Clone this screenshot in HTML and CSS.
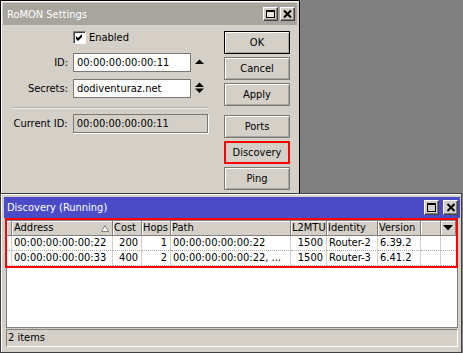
FILE: index.html
```html
<!DOCTYPE html>
<html>
<head>
<meta charset="utf-8">
<title>RoMON</title>
<link rel="stylesheet" href="styles.css">
</head>
<body>
<div class="win settings">
  <div class="title inactive">
    <span class="ttext">RoMON Settings</span>
    <div class="tbtns">
      <span class="tb"><svg width="13" height="12" viewBox="0 0 13 12"><rect x="2.5" y="2.5" width="8" height="7" fill="#e8e6e0" stroke="#000"/><rect x="2" y="2" width="9" height="2" fill="#000"/></svg></span>
      <span class="tb"><svg width="13" height="12" viewBox="0 0 13 12"><path d="M3 2.5 L10 9.5 M10 2.5 L3 9.5" stroke="#000" stroke-width="2"/></svg></span>
    </div>
  </div>
  <div class="sbody">
    <div class="lcol">
      <div class="chkrow">
        <span class="chk"><svg width="11" height="11" viewBox="0 0 11 11"><polygon points="2,4 4,6 8,2 8,5 4,9 2,7" fill="#000"/></svg></span>
        <span class="chklbl">Enabled</span>
      </div>
      <div class="frow first">
        <span class="lbl">ID:</span>
        <span class="inp">00:00:00:00:00:11</span>
        <svg class="arr" width="9" height="19" viewBox="0 0 9 19"><polygon points="0,11 4.5,6.5 9,11" fill="#000"/></svg>
      </div>
      <div class="frow second">
        <span class="lbl">Secrets:</span>
        <span class="inp">dodiventuraz.net</span>
        <svg class="arr" width="9" height="19" viewBox="0 0 9 19"><polygon points="0,8 4.5,3.5 9,8" fill="#000"/><polygon points="0,9.5 4.5,14 9,9.5" fill="#000"/></svg>
      </div>
      <div class="sep"></div>
      <div class="frow third">
        <span class="lbl">Current ID:</span>
        <span class="inp ro">00:00:00:00:00:11</span>
      </div>
    </div>
    <div class="rcol">
      <div class="btn def">OK</div>
      <div class="btn">Cancel</div>
      <div class="btn">Apply</div>
      <div class="btn gap">Ports</div>
      <div class="btn marked">Discovery</div>
      <div class="btn">Ping</div>
    </div>
  </div>
</div>

<div class="win disc">
  <div class="title active">
    <span class="ttext">Discovery (Running)</span>
    <div class="tbtns wide">
      <span class="tb"><svg width="13" height="13" viewBox="0 0 13 13"><rect x="2.5" y="2.5" width="8" height="8" fill="#d4d0c8" stroke="#000"/><rect x="2" y="2" width="9" height="2" fill="#000"/></svg></span>
      <span class="tb"><svg width="12" height="13" viewBox="0 0 12 13"><path d="M2.5 3 L9.5 10 M9.5 3 L2.5 10" stroke="#000" stroke-width="2"/></svg></span>
    </div>
  </div>
  <div class="tbl">
    <div class="grid">
      <div class="th"></div>
      <div class="th sortcol">Address<svg class="sort" width="8" height="7" viewBox="0 0 8 7"><polygon points="0.5,6.5 4,0.5 7.5,6.5" fill="#fff" stroke="#808080"/></svg></div>
      <div class="th">Cost</div>
      <div class="th">Hops</div>
      <div class="th">Path</div>
      <div class="th">L2MTU</div>
      <div class="th">Identity</div>
      <div class="th">Version</div>
      <div class="th"></div>
      <div class="th dd"><svg width="10" height="6" viewBox="0 0 10 6"><polygon points="0,0 10,0 5,5.5" fill="#000"/></svg></div>

      <div class="td"></div>
      <div class="td">00:00:00:00:00:22</div>
      <div class="td r">200</div>
      <div class="td r">1</div>
      <div class="td">00:00:00:00:00:22</div>
      <div class="td r">1500</div>
      <div class="td">Router-2</div>
      <div class="td">6.39.2</div>
      <div class="td"></div>
      <div class="td last"></div>

      <div class="td"></div>
      <div class="td">00:00:00:00:00:33</div>
      <div class="td r">400</div>
      <div class="td r">2</div>
      <div class="td">00:00:00:00:00:22, ...</div>
      <div class="td r">1500</div>
      <div class="td">Router-3</div>
      <div class="td">6.41.2</div>
      <div class="td"></div>
      <div class="td last"></div>
    </div>
  </div>
  <div class="status">2 items</div>
  <div class="mark"></div>
</div>
</body>
</html>
```

FILE: styles.css
```css
* { box-sizing: border-box; margin: 0; padding: 0; }
html, body { width: 463px; height: 353px; overflow: hidden; }
body {
  background: #808080;
  font-family: "DejaVu Sans Condensed", "Liberation Sans", sans-serif;
  font-size: 11px;
  color: #000;
  position: relative;
}

.win {
  position: absolute;
  left: 0;
  background: #d4d0c8;
  border: 1px solid #404040;
  box-shadow: inset 1px 1px 0 #fff;
  display: flex;
  flex-direction: column;
}
.settings { top: 0; width: 300px; height: 194px; padding: 2px; border-color: #000; }
.disc { top: 193px; width: 462px; height: 160px; padding: 3px 1px 5px 3px; }

.title {
  flex: none;
  display: flex;
  align-items: center;
  justify-content: space-between;
  color: #fff;
  white-space: nowrap;
}
.title.inactive { height: 22px; background: #a7a59e; padding: 0 2px 0 4px; }
.title.active { height: 21px; background: #4b4bc8; padding: 0 2px 0 3px; }

.tbtns { display: flex; gap: 2px; }
.tbtns.wide { gap: 4px; }
.tb {
  width: 15px;
  height: 14px;
  display: flex;
  align-items: center;
  justify-content: center;
  background: #d4d0c8;
  border: 1px solid;
  border-color: #fff #404040 #404040 #fff;
  box-shadow: inset -1px -1px 0 #808080;
}
.wide .tb { height: 15px; }

.sbody { display: flex; gap: 16px; padding: 6px 7px 0 9px; }
.lcol { width: 196px; display: flex; flex-direction: column; }
.rcol { width: 66px; display: flex; flex-direction: column; gap: 3px; }

.chkrow { height: 13px; display: flex; align-items: center; padding-left: 61px; }
.chk {
  width: 13px; height: 13px;
  background: #fff;
  border: 1px solid;
  border-color: #808080 #fff #fff #808080;
  box-shadow: inset 1px 1px 0 #404040;
  display: flex;
}
.chklbl { margin-left: 3px; line-height: 13px; }

.frow { height: 19px; display: flex; align-items: center; }
.frow.first { margin-top: 9px; }
.frow.second { margin-top: 7px; }
.frow.third { margin-top: 5px; }
.lbl { width: 56px; text-align: right; margin-right: 5px; white-space: nowrap; }
.inp {
  width: 118px; height: 19px;
  background: #fff;
  border: 1px solid #7a7872;
  padding-left: 3px;
  line-height: 17px;
  white-space: nowrap;
}
.inp.ro { width: 136px; background: #d4d0c8; box-shadow: 1px 1px 0 #fff; }
.arr { margin-left: 4px; }
.sep { margin-top: 9px; height: 2px; border-top: 1px solid #b4b1aa; border-bottom: 1px solid #ecebe7; }

.btn {
  height: 23px;
  line-height: 21px;
  text-align: center;
  background: #d4d0c8;
  border: 1px solid #7c7a74;
  box-shadow: inset 1px 1px 0 #fff, inset -1px -1px 0 #a8a59f;
}
.btn.def { border-color: #000; }
.btn.gap { margin-top: 6px; }
.btn.marked { border: 2px solid #ff0000; box-shadow: none; line-height: 19px; }

.tbl {
  margin: 2px 2px 0 2px;
  height: 108px;
  background: #fff;
  border: 1px solid #808080;
  overflow: hidden;
}
.grid {
  display: grid;
  grid-template-columns: 5px 101px 29px 29px 120px 36px 51px 43px 20px 15px;
}
.th {
  height: 15px;
  background: #d4d0c8;
  border-right: 1px solid #808080;
  border-bottom: 1px solid #808080;
  box-shadow: inset 1px 1px 0 #fff;
  padding-left: 1px;
  line-height: 14px;
  white-space: nowrap;
  overflow: hidden;
  position: relative;
}
.th.sortcol { padding-left: 2px; }
.sort { position: absolute; right: 3px; top: 4px; }
.dd { display: flex; align-items: center; justify-content: center; padding: 0; }
.td {
  height: 15px;
  border-right: 1px solid #d4d0c8;
  border-bottom: 1px dotted #a8a8a8;
  padding: 0 2px;
  line-height: 14px;
  white-space: nowrap;
  overflow: hidden;
}
.td.last { border-right: none; }
.r { text-align: right; padding-right: 3px; }

.status {
  margin: 1px 2px 0 2px;
  height: 18px;
  border: 1px solid;
  border-color: #808080 #fff #fff #808080;
  padding-left: 1px;
  line-height: 16px;
}

.mark {
  position: absolute;
  left: 4px;
  top: 24px;
  width: 453px;
  height: 50px;
  border: 2px solid #ff0000;
}
```
